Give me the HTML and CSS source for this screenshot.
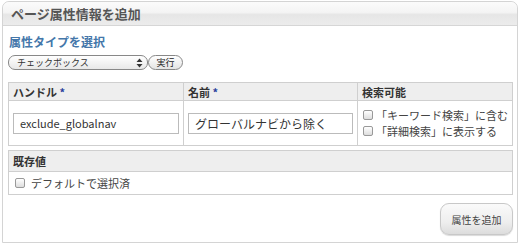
FILE: index.html
```html
<!DOCTYPE html>
<html lang="ja">
<head>
  <meta charset="UTF-8">
  <title>ページ属性情報を追加</title>
  <link rel="stylesheet" href="styles.css">
</head>
<body>

  <div class="panel">
    <div class="panel-head">ページ属性情報を追加</div>
    <div class="panel-body">

      <h2 class="section-title">属性タイプを選択</h2>
      <div class="type-row">
        <div class="select">
          <span>チェックボックス</span>
          <svg width="7" height="10" viewBox="0 0 7 10"><path d="M3.5 0.5 L6.5 4 L0.5 4 Z M3.5 9.5 L6.5 6 L0.5 6 Z" fill="#333"/></svg>
        </div>
        <button class="go-btn">実行</button>
      </div>

      <table class="grid">
        <tr>
          <th class="col-handle">ハンドル <span class="req">*</span></th>
          <th class="col-name">名前 <span class="req">*</span></th>
          <th>検索可能</th>
        </tr>
        <tr>
          <td><div class="field">exclude_globalnav</div></td>
          <td><div class="field jp">グローバルナビから除く</div></td>
          <td class="checks">
            <label><span class="box"></span>「キーワード検索」に含む</label>
            <label><span class="box"></span>「詳細検索」に表示する</label>
          </td>
        </tr>
      </table>

      <table class="grid second">
        <tr><th>既存値</th></tr>
        <tr><td class="checks"><label><span class="box"></span>デフォルトで選択済</label></td></tr>
      </table>

      <div class="actions">
        <button class="add-btn">属性を追加</button>
      </div>

    </div>
  </div>

</body>
</html>
```

FILE: styles.css
```css
body {
  margin: 0;
  padding: 1px 2px 0 2px;
  background: #fff;
  font-family: "Noto Sans CJK JP", "DejaVu Sans", sans-serif;
  color: #333;
}
.panel {
  border: 1px solid #d4d4d4;
  border-radius: 7px 7px 0 0;
  height: 242px;
  box-sizing: border-box;
}
.panel-head {
  height: 23px;
  line-height: 23px;
  padding-left: 8px;
  font-size: 13px;
  font-weight: bold;
  color: #555;
  border-bottom: 1px solid #d6d6d6;
  border-radius: 7px 7px 0 0;
  background: linear-gradient(#fbfbfb, #f4f4f4 45%, #e6e6e6 55%, #ececec);
}
.panel-body {
  padding: 0 4px 0 5px;
}
.section-title {
  margin: 8px 0 0 1px;
  font-size: 12px;
  line-height: 16px;
  color: #4477aa;
}
.type-row {
  display: flex;
  margin-top: 5px;
  height: 15px;
}
.select {
  height: 13px;
  border: 1px solid #888;
  border-radius: 7px;
  display: flex;
  align-items: center;
  justify-content: space-between;
  padding: 0 4px 0 8px;
  width: 126px;
  font-size: 9px;
  background: linear-gradient(#fff, #e8e8e8);
}
.go-btn {
  margin: 0;
  width: 35px;
  height: 15px;
  padding: 0;
  border: 1px solid #888;
  border-radius: 8px;
  font-family: inherit;
  font-size: 9px;
  line-height: 13px;
  color: #222;
  background: linear-gradient(#fff, #e4e4e4);
}
.grid {
  width: 505px;
  border-collapse: collapse;
  margin-top: 12px;
  font-size: 11px;
}
.grid th, .grid td {
  border: 1px solid #cfcfcf;
  text-align: left;
}
.grid th {
  background: #eeeeee;
  height: 17px;
  padding: 0 0 0 4px;
  font-weight: bold;
  color: #333;
}
.grid td {
  height: 44px;
  padding: 0 4px;
}
.col-handle { width: 170px; }
.col-name { width: 169px; }
.req {
  color: #2a3f9c;
}
.field {
  height: 19px;
  line-height: 19px;
  border: 1px solid #bbb;
  padding-left: 6px;
  font-size: 11px;
  color: #333;
}
.field.jp {
  font-size: 12px;
}
.checks label {
  display: flex;
  align-items: center;
  font-size: 11px;
  color: #444;
  line-height: 16px;
  white-space: nowrap;
}
.grid td.checks {
  padding: 0 2px 0 4px;
}
.box {
  width: 8px;
  height: 8px;
  border: 1px solid #999;
  border-radius: 2px;
  background: linear-gradient(#fff, #ddd);
  margin: 0 3px 0 1px;
  flex: none;
}
.second {
  margin-top: 4px;
}
.second th {
  height: 20px;
}
.second td {
  height: 22px;
}
.second .box {
  margin-left: 2px;
  margin-right: 6px;
}
.actions {
  display: flex;
  justify-content: flex-end;
  margin-top: 8px;
}
.add-btn {
  width: 73px;
  height: 32px;
  border: 1px solid #c8c8c8;
  border-radius: 9px;
  font-family: inherit;
  font-size: 10px;
  color: #444;
  background: linear-gradient(#fafafa, #eeeeee 60%, #dcdcdc);
  box-shadow: 0 1px 1px rgba(0,0,0,0.15);
}
```
